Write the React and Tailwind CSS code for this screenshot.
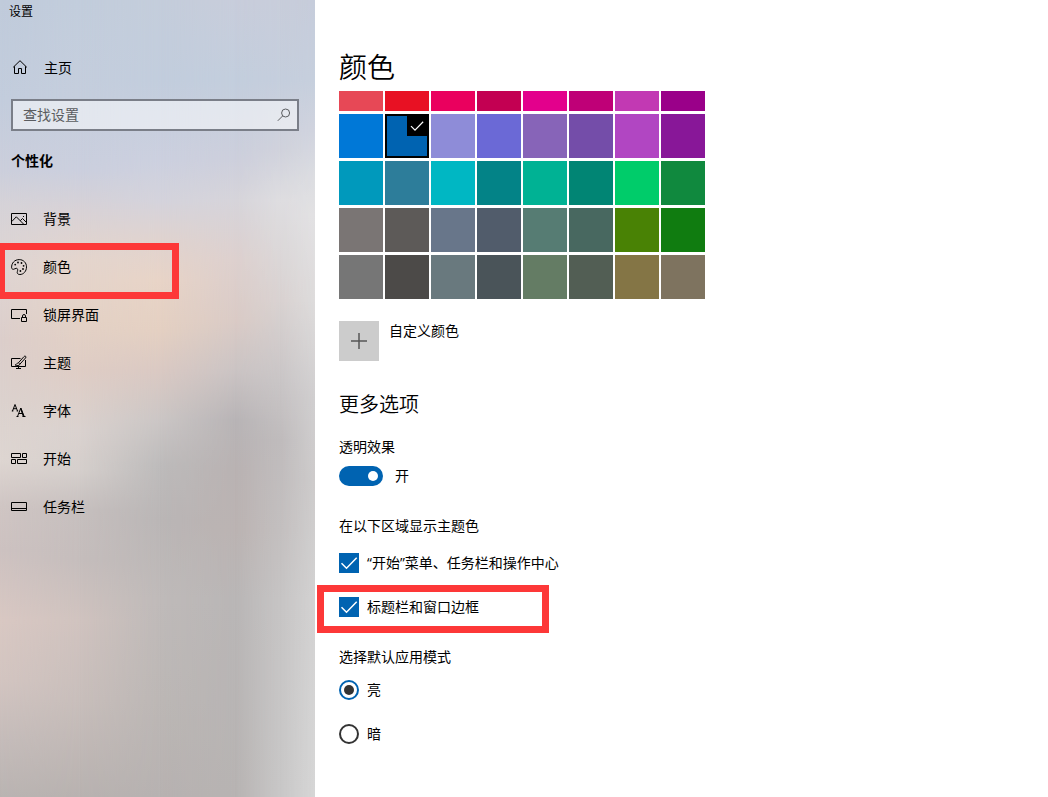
import { useState } from "react";

const iconProps = {
  width: 16,
  height: 16,
  viewBox: "0 0 16 16",
  fill: "none",
  stroke: "currentColor",
  strokeWidth: 1,
  "aria-hidden": true,
  className: "shrink-0",
};

function HomeIcon() {
  return (
    <svg {...iconProps}>
      <path d="M1.200 7.300 8 .7l6.800 6.600M2.500 6.300v7.200h4v-5h3v5h4V6.300" />
    </svg>
  );
}

function PictureIcon() {
  return (
    <svg {...iconProps}>
      <path d="M.5 2.500h15v11H.5zM.8 10.500l4.500-4.700 7.500 7.500M9.300 9.700l2.200-2.200 3.800 3.800" />
      <path d="M12 5h1v1h-1z" fill="currentColor" stroke="none" />
    </svg>
  );
}

function PaletteIcon() {
  return (
    <svg {...iconProps}>
      <path d="M.6 8.800C.4 4 3.600.6 8.200.6c4.300 0 7.300 3.200 7.300 7.300 0 4.400-3 7.600-6.600 7.600-2.600 0-3-1.700-2.500-3.100.6-1.600.3-3-1-3.100-1.400-.1-1.700 1-2.800 1-.9 0-1.900-.3-2-1.500z" />
      <g fill="currentColor" stroke="none">
        <circle cx="4.200" cy="5.600" r="0.900" />
        <circle cx="7" cy="3.500" r="0.900" />
        <circle cx="10.500" cy="4" r="0.900" />
        <circle cx="12.600" cy="6.800" r="0.900" />
        <circle cx="12" cy="10" r="0.900" />
        <circle cx="9.400" cy="12" r="0.900" />
      </g>
    </svg>
  );
}

function LockScreenIcon() {
  return (
    <svg {...iconProps}>
      <path d="M9 11.500H.5v-9h15V7M10.500 10.500h5v4h-5zM11.500 10.500V9a1.500 1.500 0 0 1 3 0v1.500" />
    </svg>
  );
}

function ThemeIcon() {
  return (
    <svg {...iconProps}>
      <path d="M9.500 3.500h-9v8h14V5M7.500 11.500v2M5 13.500h5" />
      <path d="M7.400 7.800 13 1.600c.6-.6 1.400-.6 1.700-.2.400.4.3 1-.2 1.600L8.900 9.200M7.400 7.800l1.500 1.400M7.400 7.800c-1.600 0-1.700 2-3.200 2.200 1.500 1 4.600.8 4.700-.8" />
    </svg>
  );
}

function FontIcon() {
  return (
    <svg {...iconProps}>
      <path d="M1.500 8 4 1.500 6.500 8M2.400 5.700h3.200M.8 8h1.500M5.700 8h1.500" />
      <path d="M6.500 13.500 9.800 5l3.400 8.500M7.700 10.500h4.300M5.500 13.500h2M11.500 13.500h3" />
      <path d="m9.800 5.500 2.700 8" strokeWidth="1.300" />
    </svg>
  );
}

function StartIcon() {
  return (
    <svg {...iconProps}>
      <path d="M.5 2.500h9v4h-9zM11.500 2.500h4v4h-4zM.5 8.500h4v4h-4zM6.500 8.500h9v4h-9z" />
    </svg>
  );
}

function TaskbarIcon() {
  return (
    <svg {...iconProps}>
      <path d="M.5 3.500h15v8H.5zM.5 9.500h15" />
    </svg>
  );
}

function SearchIcon() {
  return (
    <svg {...iconProps} width={14} height={14} viewBox="0 0 14 14">
      <circle cx="8.600" cy="5" r="4" />
      <path d="M5.700 7.900.8 12.800" />
    </svg>
  );
}

const navItems = [
  { label: "背景", Icon: PictureIcon },
  { label: "颜色", Icon: PaletteIcon, marked: true },
  { label: "锁屏界面", Icon: LockScreenIcon },
  { label: "主题", Icon: ThemeIcon },
  { label: "字体", Icon: FontIcon },
  { label: "开始", Icon: StartIcon },
  { label: "任务栏", Icon: TaskbarIcon },
];

const firstRow = [
  "bg-[#e74856]", "bg-[#e81123]", "bg-[#ea005e]", "bg-[#c30052]",
  "bg-[#e3008c]", "bg-[#bf0077]", "bg-[#c239b3]", "bg-[#9a0089]",
];

const swatches = [
  "bg-[#0078d7]", "bg-[#0063b1]", "bg-[#8e8cd8]", "bg-[#6b69d6]",
  "bg-[#8764b8]", "bg-[#744da9]", "bg-[#b146c2]", "bg-[#881798]",
  "bg-[#0099bc]", "bg-[#2d7d9a]", "bg-[#00b7c3]", "bg-[#038387]",
  "bg-[#00b294]", "bg-[#018574]", "bg-[#00cc6a]", "bg-[#10893e]",
  "bg-[#7a7574]", "bg-[#5d5a58]", "bg-[#68768a]", "bg-[#515c6b]",
  "bg-[#567c73]", "bg-[#486860]", "bg-[#498205]", "bg-[#107c10]",
  "bg-[#767676]", "bg-[#4c4a48]", "bg-[#69797e]", "bg-[#4a5459]",
  "bg-[#647c64]", "bg-[#525e54]", "bg-[#847545]", "bg-[#7e735f]",
];

// Vertical colour ramps, each faded in from left to right over the one before.
const wallpaperLayers = [
  "bg-[linear-gradient(180deg,#c0cbdb_0px,#c3cddd_100px,#cccfdc_170px,#d6d3d8_205px,#dfd5d3_270px,#dccecb_340px,#dcd2ce_400px,#ded6d2_460px,#d0c6c4_505px,#cdc2c1_550px,#d9c8c3_620px,#d3c5c1_680px,#c5bcba_740px,#bab4b2_797px)]",
  "bg-[linear-gradient(180deg,#c2cddc_0px,#c5cedd_100px,#cbcfde_170px,#d8d2d6_210px,#e4d5cd_260px,#e4d2c6_320px,#dfcdc5_370px,#dad2cf_430px,#d5cfcc_470px,#c6bfbe_510px,#c5bdbc_560px,#d0c3bf_620px,#c8bebb_700px,#b8b2b0_797px)] [mask-image:linear-gradient(90deg,transparent_0px,black_80px)]",
  "bg-[linear-gradient(180deg,#c4cddb_0px,#c2cddd_80px,#ccd0df_160px,#d4d3dc_200px,#e0d3cf_240px,#e8d4c7_280px,#e4d0c2_330px,#dac9c3_370px,#cbc6c5_420px,#bdbbbb_465px,#bab6b6_520px,#bfbab9_600px,#bcb7b5_700px,#b7b2b1_797px)] [mask-image:linear-gradient(90deg,transparent_80px,black_160px)]",
  "bg-[linear-gradient(180deg,#c8cddb_0px,#c3cedd_80px,#cdcfdc_160px,#d6d4da_200px,#ddd0ce_260px,#dacbc6_320px,#cbc4c4_370px,#b8b4b6_420px,#b9b2b2_470px,#bbb3b2_530px,#b9b6b6_600px,#b7b3b2_797px)] [mask-image:linear-gradient(90deg,transparent_160px,black_235px)]",
  "bg-[linear-gradient(180deg,#c8cddb_0px,#c5cedd_80px,#d0d2dc_150px,#dedde0_200px,#d9d2d1_300px,#c9c5c6_380px,#bfbbbc_440px,#c3bfbf_530px,#c6c4c4_600px,#c8c7c7_797px)] [mask-image:linear-gradient(90deg,transparent_235px,black_280px)]",
  "bg-[linear-gradient(180deg,#c6ccda_0px,#c6cfdd_80px,#d0d3de_130px,#dcdde1_180px,#e2e1e3_215px,#dddbdb_300px,#d0cecf_400px,#cdcbcb_480px,#d3d2d2_600px,#d6d6d6_797px)] [mask-image:linear-gradient(90deg,transparent_280px,black_315px)]",
];

function CheckMark({ className }) {
  return (
    <svg
      viewBox="0 0 20 20"
      fill="none"
      stroke="white"
      strokeWidth="1.500"
      aria-hidden="true"
      className={className}
    >
      <path d="m2.500 10.200 5 5L17.700 4.700" />
    </svg>
  );
}

function CheckOption({ label, marked }) {
  return (
    <div className="relative">
      <label className="flex h-5 w-fit items-center gap-2">
        <span className="relative h-5 w-5">
          <input
            type="checkbox"
            defaultChecked
            className="peer block h-5 w-5 appearance-none border-2 border-[#333] checked:border-[#0063b1] checked:bg-[#0063b1]"
          />
          <CheckMark className="pointer-events-none absolute inset-0 hidden h-5 w-5 peer-checked:block" />
        </span>
        <span>{label}</span>
      </label>
      {marked && (
        <span className="pointer-events-none absolute -top-3 -left-[22px] h-12 w-[232px] border-[7px] border-[#fd3838]" />
      )}
    </div>
  );
}

function RadioOption({ label, checked, onChange }) {
  return (
    <label className="flex h-5 w-fit items-center gap-2">
      <span className="relative h-5 w-5">
        <input
          type="radio"
          name="app-mode"
          checked={checked}
          onChange={onChange}
          className="peer block h-5 w-5 appearance-none rounded-full border-2 border-[#333] checked:border-[#0063b1]"
        />
        <span className="pointer-events-none absolute inset-[5px] hidden rounded-full bg-[#333] peer-checked:block" />
      </span>
      <span>{label}</span>
    </label>
  );
}

export default function App() {
  const [selected, setSelected] = useState(1);
  const [mode, setMode] = useState("亮");

  return (
    <div className="flex min-h-screen bg-white font-['Open_Sans','Noto_Sans_CJK_SC',sans-serif] text-sm leading-5 text-black">
      <aside className="relative isolate w-[315px] shrink-0">
        {wallpaperLayers.map((layer) => (
          <div key={layer} aria-hidden="true" className={`absolute inset-0 -z-10 ${layer}`} />
        ))}
        <p className="px-[9px] pt-0.5 text-xs leading-5">设置</p>
        <a href="#home" className="mt-6 flex h-11 items-center gap-4 px-3">
          <HomeIcon />
          <span>主页</span>
        </a>
        <div className="mt-[9px] mr-4 ml-[11px] flex h-8 items-center border-2 border-[#7a7e88] bg-white/50 pr-1.5 pl-2.5 text-[#5a5c60]">
          <input
            type="text"
            aria-label="查找设置"
            placeholder="查找设置"
            className="min-w-0 flex-1 bg-transparent outline-none placeholder:text-[#5a5c60]"
          />
          <button type="button" aria-label="搜索">
            <SearchIcon />
          </button>
        </div>
        <h2 className="mt-5 px-[11px] font-bold">个性化</h2>
        <nav className="mt-6">
          <ul>
            {navItems.map(({ label, Icon, marked }) => (
              <li key={label} className="relative">
                <a href="#section" className="flex h-12 items-center gap-4 px-[11px]">
                  <Icon />
                  <span className="leading-[22px]">{label}</span>
                </a>
                {marked && (
                  <span className="pointer-events-none absolute top-0 left-0 h-14 w-[179px] border-[7px] border-l-[5px] border-[#fd3838]" />
                )}
              </li>
            ))}
          </ul>
        </nav>
      </aside>

      <main className="min-w-0 flex-1 px-6 pt-[47px] pb-10">
        <h1 className="text-[28px] leading-10 font-[350]">颜色</h1>

        <div className="mt-1 grid w-fit grid-cols-8 gap-x-0.5 gap-y-[3px]">
          {firstRow.map((color) => (
            <button key={color} type="button" aria-label="主题色" className={`h-5 w-11 ${color}`} />
          ))}
          {swatches.map((color, index) => (
            <button
              key={color}
              type="button"
              aria-label="主题色"
              aria-pressed={selected === index}
              onClick={() => setSelected(index)}
              className={`flex h-11 w-11 items-start justify-end ${color} ${
                selected === index ? "border-2 border-black" : ""
              }`}
            >
              {selected === index && (
                <span className="flex h-5 w-5 items-center justify-center bg-black">
                  <CheckMark className="h-4 w-4" />
                </span>
              )}
            </button>
          ))}
        </div>

        <button type="button" className="mt-[22px] flex items-start gap-2.5">
          <span className="flex h-10 w-10 items-center justify-center bg-[#ccc]">
            <svg width="16" height="16" viewBox="0 0 16 16" stroke="#555" strokeWidth="1.500" aria-hidden="true">
              <path d="M0 8h16M8 0v16" />
            </svg>
          </span>
          <span>自定义颜色</span>
        </button>

        <h2 className="mt-[30px] text-xl leading-7 font-[350]">更多选项</h2>

        <p id="transparency" className="mt-[18px]">透明效果</p>
        <label className="mt-[9px] flex h-5 w-fit items-center gap-3">
          <span className="relative h-5 w-11">
            <input
              type="checkbox"
              role="switch"
              aria-labelledby="transparency"
              defaultChecked
              className="peer block h-5 w-11 appearance-none rounded-full bg-[#999] checked:bg-[#0063b1]"
            />
            <span className="pointer-events-none absolute top-[5px] left-[5px] h-2.5 w-2.5 rounded-full bg-white peer-checked:left-[29px]" />
          </span>
          <span>开</span>
        </label>

        <p className="mt-[30px]">在以下区域显示主题色</p>
        <div className="mt-[17px] flex flex-col gap-6">
          <CheckOption label="“开始”菜单、任务栏和操作中心" />
          <CheckOption label="标题栏和窗口边框" marked />
        </div>

        <p className="mt-[30px]">选择默认应用模式</p>
        <div className="mt-[13px] flex flex-col gap-6">
          <RadioOption label="亮" checked={mode === "亮"} onChange={() => setMode("亮")} />
          <RadioOption label="暗" checked={mode === "暗"} onChange={() => setMode("暗")} />
        </div>
      </main>
    </div>
  );
}
